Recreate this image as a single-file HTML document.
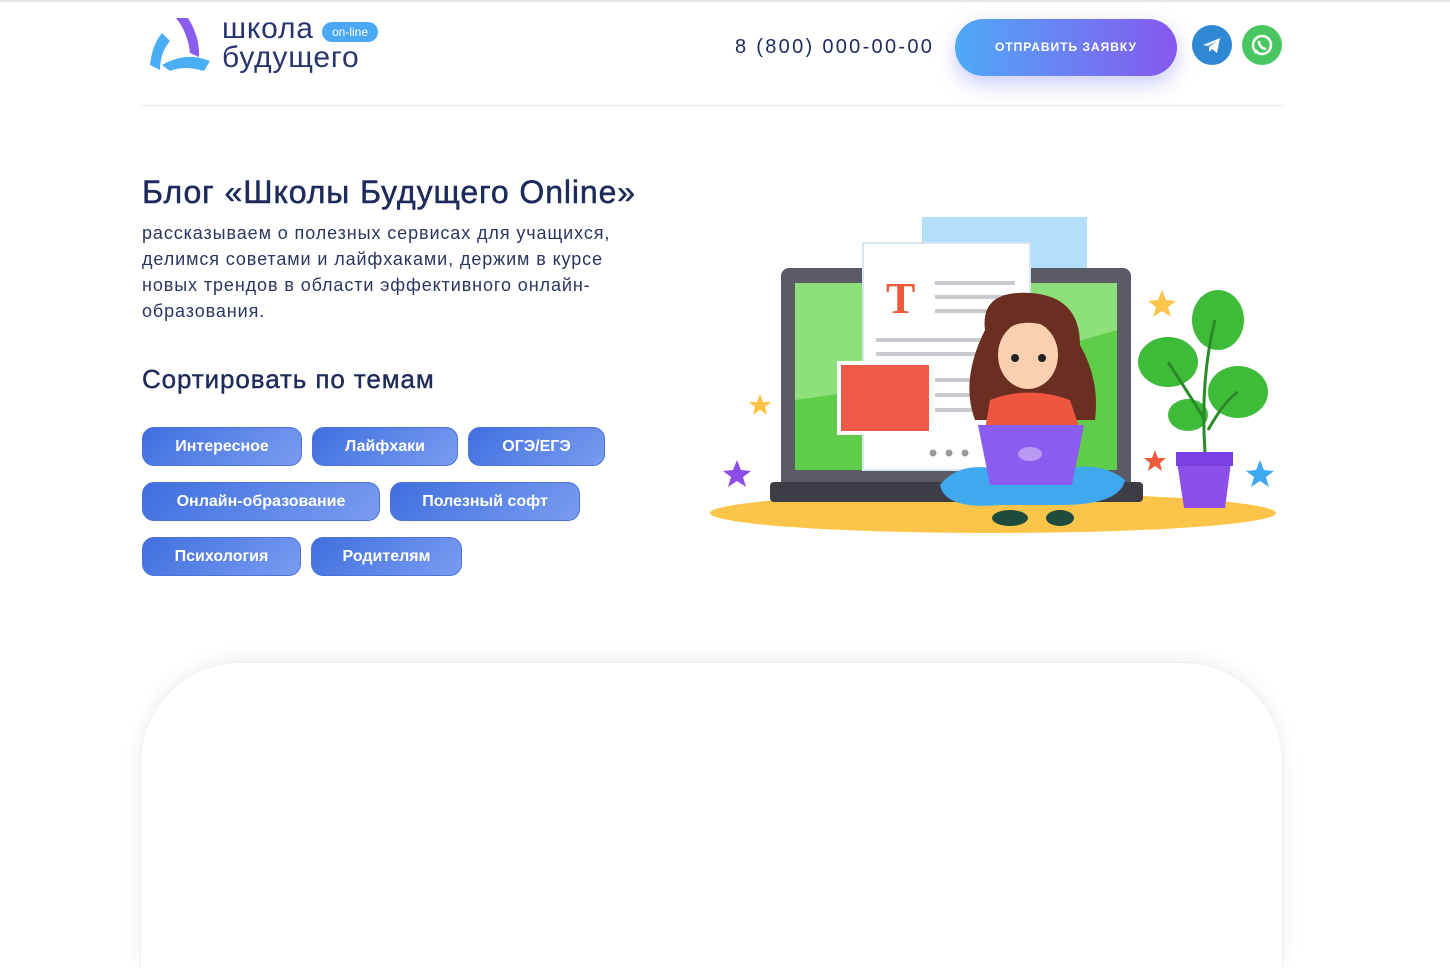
<!DOCTYPE html>
<html><head><meta charset="utf-8"><style>
*{margin:0;padding:0;box-sizing:border-box}
html,body{width:1450px;height:968px;overflow:hidden}
body{background:#fff;font-family:"Liberation Sans",sans-serif;color:#1e2a5c;position:relative}
.top{position:absolute;left:0;top:0;width:1450px;height:2px;background:#e5e7ee}
.hr{position:absolute;left:142px;top:105px;width:1141px;height:1px;background:#e8e9ef}
.logo-t{position:absolute;left:222px;font-size:30px;color:#273470;letter-spacing:.8px}
.badge{position:absolute;left:322px;top:22px;width:56px;height:20px;border-radius:10px;background:#4aa8f5;color:#fff;font-size:12px;text-align:center;line-height:20px}
.phone{position:absolute;left:735px;top:36px;font-size:20px;color:#1e2a5c;letter-spacing:2.3px}
.cta{position:absolute;left:955px;top:19px;width:222px;height:57px;border-radius:29px;background:linear-gradient(90deg,#4fa9f7,#8658ee);color:#fff;font-size:12px;font-weight:bold;letter-spacing:1px;text-align:center;line-height:57px;box-shadow:0 8px 20px rgba(110,110,240,.35)}
.ic{position:absolute;top:25px;width:40px;height:40px;border-radius:50%}
h1{position:absolute;left:142px;top:174px;font-size:32px;font-weight:normal;color:#1e2a5c;letter-spacing:.9px;-webkit-text-stroke:.5px #1e2a5c;white-space:nowrap}
.desc{position:absolute;left:142px;top:220px;width:522px;font-size:18px;line-height:26px;color:#2b3560;letter-spacing:.9px}
h2{position:absolute;left:142px;top:364px;font-size:26px;font-weight:normal;color:#1e2a5c;letter-spacing:.9px;-webkit-text-stroke:.4px #1e2a5c}
.b{position:absolute;height:39px;border-radius:12px;background:linear-gradient(135deg,#3f6fdf,#7a9cf0);border:1px solid #4d72d8;color:#fff;font-size:16px;font-weight:bold;text-align:center;line-height:37px}
.card{position:absolute;left:140px;top:662px;width:1143px;height:306px;border-radius:100px 100px 0 0;background:#fff;box-shadow:0 -2px 18px rgba(40,50,90,.08);border:1px solid #eef0f4;border-bottom:none}
</style></head><body>
<div class="top"></div>
<svg style="position:absolute;left:148px;top:15px" width="66" height="58" viewBox="0 0 66 58">
<path d="M28 3 L40 3 Q52 22 51 42 L42 38 Q40 18 28 3Z" fill="#8b5cf0"/>
<path d="M14 18 Q4 30 2 50 L12 55 Q12 38 22 26Z" fill="#4aaef5"/>
<path d="M14 50 Q38 36 62 46 L56 56 Q36 50 22 56Z" fill="#4aaef5"/>
</svg>
<div class="logo-t" style="top:12px">школа</div>
<div class="logo-t" style="top:41px">будущего</div>
<div class="badge">on-line</div>
<div class="phone">8 (800) 000-00-00</div>
<div class="cta">ОТПРАВИТЬ ЗАЯВКУ</div>
<div class="ic" style="left:1192px;background:#2f88d4"><svg width="40" height="40" viewBox="0 0 40 40"><path d="M11 20 L28 13 L25 28 L20 24 L17 27 L17 22 L25 16 L16 21Z" fill="#fff"/></svg></div>
<div class="ic" style="left:1242px;background:#48c760"><svg width="40" height="40" viewBox="0 0 40 40"><circle cx="20" cy="20" r="9" fill="none" stroke="#fff" stroke-width="2.5"/><path d="M12 29 L14 24 L17 27Z" fill="#fff"/><path d="M17 16 Q17 23 24 24" stroke="#fff" stroke-width="2.5" fill="none"/></svg></div>
<div class="hr"></div>
<h1>Блог «Школы Будущего Online»</h1>
<div class="desc">рассказываем о полезных сервисах для учащихся, делимся советами и лайфхаками, держим в курсе новых трендов в области эффективного онлайн-образования.</div>
<h2>Сортировать по темам</h2>
<div class="b" style="left:142px;top:427px;width:160px">Интересное</div>
<div class="b" style="left:312px;top:427px;width:146px">Лайфхаки</div>
<div class="b" style="left:468px;top:427px;width:137px">ОГЭ/ЕГЭ</div>
<div class="b" style="left:142px;top:482px;width:238px">Онлайн-образование</div>
<div class="b" style="left:390px;top:482px;width:190px">Полезный софт</div>
<div class="b" style="left:142px;top:537px;width:159px">Психология</div>
<div class="b" style="left:311px;top:537px;width:151px">Родителям</div>
<svg style="position:absolute;left:700px;top:200px" width="590" height="345" viewBox="700 200 590 345">
<ellipse cx="993" cy="513" rx="283" ry="20" fill="#fcc54a"/>
<rect x="922" y="217" width="165" height="60" fill="#b5defa"/>
<rect x="781" y="268" width="350" height="222" rx="8" fill="#5b5b66"/>
<rect x="795" y="283" width="322" height="187" fill="#5fcc4a"/>
<path d="M795 283 H1117 V330 Q950 380 795 400Z" fill="#8ee07a"/>
<rect x="770" y="482" width="373" height="20" rx="4" fill="#3d3d46"/>
<path d="M863 243 H1030 V470 H863Z" fill="#fff" stroke="#d8e6f4" stroke-width="2"/>
<text x="886" y="313" font-family="Liberation Serif" font-size="44" font-weight="bold" fill="#f05a3c">T</text>
<g stroke="#c9c9cf" stroke-width="4"><line x1="935" y1="283" x2="1015" y2="283"/><line x1="935" y1="297" x2="1015" y2="297"/><line x1="935" y1="311" x2="1015" y2="311"/><line x1="876" y1="340" x2="1015" y2="340"/><line x1="876" y1="354" x2="1015" y2="354"/><line x1="935" y1="380" x2="1015" y2="380"/><line x1="935" y1="395" x2="1015" y2="395"/><line x1="935" y1="410" x2="1015" y2="410"/></g>
<rect x="839" y="363" width="92" height="70" fill="#ef5a48" stroke="#fff" stroke-width="4"/>
<circle cx="933" cy="453" r="3.5" fill="#999"/><circle cx="949" cy="453" r="3.5" fill="#999"/><circle cx="965" cy="453" r="3.5" fill="#999"/>
<path d="M985 330 Q980 290 1030 293 Q1080 296 1080 345 Q1100 380 1095 420 L975 420 Q960 380 985 330Z" fill="#6b2f22"/>
<ellipse cx="1028" cy="355" rx="30" ry="34" fill="#fbd0b0"/>
<path d="M995 345 Q1010 310 1060 330 Q1050 300 1020 305 Q995 315 995 345Z" fill="#6b2f22"/>
<circle cx="1015" cy="358" r="4" fill="#222"/><circle cx="1042" cy="358" r="4" fill="#222"/>
<path d="M990 400 Q1030 385 1070 400 L1080 430 H985Z" fill="#f0553f"/>
<path d="M940 485 Q960 460 1000 470 L1060 470 Q1100 460 1125 480 Q1120 505 1060 505 L1000 505 Q945 510 940 485Z" fill="#3fa9f0"/>
<path d="M978 425 H1084 L1072 485 H990Z" fill="#8b5cf0"/>
<ellipse cx="1030" cy="454" rx="12" ry="7" fill="#b99af5"/>
<ellipse cx="1010" cy="518" rx="18" ry="8" fill="#1f4a3e"/><ellipse cx="1060" cy="518" rx="14" ry="8" fill="#1f4a3e"/>
<path d="M1176 455 H1232 L1225 508 H1184Z" fill="#8b4ee8"/><rect x="1176" y="452" width="57" height="14" fill="#7a3fe0"/>
<g fill="#3fbb3a"><ellipse cx="1218" cy="320" rx="26" ry="30"/><ellipse cx="1168" cy="362" rx="30" ry="25"/><ellipse cx="1238" cy="392" rx="30" ry="26"/><ellipse cx="1188" cy="415" rx="20" ry="16"/></g>
<path d="M1205 452 Q1200 380 1215 320 M1205 420 Q1180 380 1168 362 M1208 430 Q1225 400 1238 392" stroke="#2a8a2a" stroke-width="3" fill="none"/>
<polygon points="1162,290 1166,300 1176,301 1168,307 1171,317 1162,311 1153,317 1156,307 1148,301 1158,300" fill="#fcc54a"/>
<polygon points="760,394 763,402 771,402 765,407 767,415 760,410 753,415 755,407 749,402 757,402" fill="#fcc54a"/>
<polygon points="737,460 741,470 751,471 743,477 746,487 737,481 728,487 731,477 723,471 733,470" fill="#8b4ee8"/>
<polygon points="1155,450 1158,458 1166,458 1160,463 1162,471 1155,466 1148,471 1150,463 1144,458 1152,458" fill="#f05a3c"/>
<polygon points="1260,460 1264,470 1274,471 1266,477 1269,487 1260,481 1251,487 1254,477 1246,471 1256,470" fill="#3fa9f0"/>
</svg>
<div class="card"></div>
</body></html>
